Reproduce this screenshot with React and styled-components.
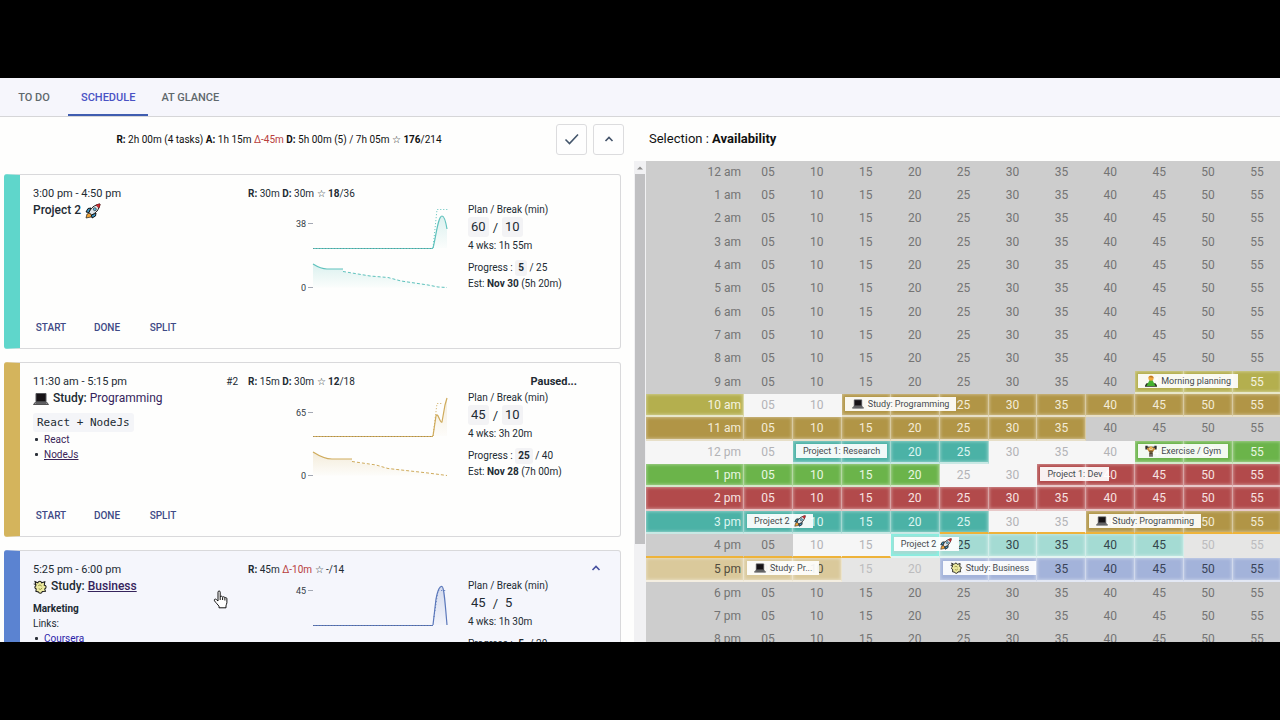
import React from "react";
import styled, { createGlobalStyle, css } from "styled-components";

const GlobalStyle = createGlobalStyle`
  * { box-sizing: border-box; }
  body {
    margin: 0;
    background: #000;
    color: #222b33;
    font-family: Roboto, "Liberation Sans", sans-serif;
    font-size: 10px;
    line-height: 15px;
  }
  button { font-family: inherit; cursor: pointer; }
`;

const Page = styled.div`
  display: flex;
  flex-direction: column;
  height: 100vh;
  padding: 78px 0;
  background: #000;
`;

const Screen = styled.main`
  position: relative;
  flex: 1;
  min-height: 0;
  display: flex;
  flex-direction: column;
  overflow: hidden;
  background: #fefefd;
`;

const TabBar = styled.nav`
  flex: none;
  display: flex;
  height: 39px;
  background: #f6f6fc;
  border-bottom: 1px solid #d6d6d8;
`;

const Tab = styled.button`
  min-width: 68px;
  padding: 2px 13px 0;
  border: 0;
  border-bottom: 2px solid ${(p) => (p.$active ? "#3f5db0" : "transparent")};
  background: none;
  color: ${(p) => (p.$active ? "#4a52c4" : "#5f686c")};
  font-size: 11px;
  font-weight: 500;
`;

const Body = styled.div`
  flex: 1;
  min-height: 0;
  display: grid;
  grid-template-columns: minmax(0, 646fr) minmax(0, 634fr);
`;

const Panel = styled.section`
  min-height: 0;
  display: flex;
  flex-direction: column;
`;

const Summary = styled.header`
  flex: none;
  display: flex;
  align-items: center;
  gap: 6px;
  height: 44px;
  padding-right: 22px;
`;

const SummaryText = styled.div`
  flex: 1;
  padding-left: 8px;
  text-align: center;
  color: #111;
`;

const IconButton = styled.button`
  display: grid;
  place-items: center;
  width: 31px;
  height: 31px;
  padding: 0;
  border: 1px solid #dcdcde;
  border-radius: 3px;
  background: #fefefe;
`;

const Delta = styled.span`
  color: #b8403c;
`;

const ListArea = styled.div`
  flex: 1;
  min-height: 0;
  display: flex;
`;

const CardList = styled.div`
  flex: 1;
  min-width: 0;
  display: flex;
  flex-direction: column;
  gap: 13px;
  padding: 13px 13px 0 4px;
  overflow: hidden;
`;

const Scrollbar = styled.div`
  flex: none;
  width: 12px;
  display: flex;
  flex-direction: column;
  align-items: center;
  background: #f1f1f3;
`;

const ScrollArrow = styled.svg`
  flex: none;
  display: block;
  width: 12px;
  height: 13px;
`;

const Thumb = styled.div`
  width: 10px;
  height: 77%;
  background: #c0c0c2;
`;

const Card = styled.article`
  flex: none;
  display: grid;
  grid-template-columns: minmax(0, 215fr) minmax(0, 220fr) minmax(0, 152fr);
  height: 175px;
  padding: 11px 0 12px 13px;
  border: 1px solid #d9d9db;
  border-left: 16px solid ${(p) => p.$accent};
  border-radius: 3px;
  background: ${(p) => (p.$hover ? "#f5f6fc" : "#fefefd")};
`;

const TaskColumn = styled.div`
  display: flex;
  flex-direction: column;
`;

const TimeLine = styled.div`
  display: flex;
  justify-content: space-between;
  padding-right: 10px;
  font-size: 11px;
  line-height: 16px;
`;

const Order = styled.span`
  font-size: 10px;
`;

const Title = styled.h2`
  display: flex;
  align-items: center;
  gap: 4px;
  margin: 0;
  font-size: 12px;
  font-weight: 500;
  line-height: 17px;
`;

const TitleLink = styled.a`
  color: #35245c;
  font-weight: ${(p) => (p.$underline ? 500 : 400)};
  text-decoration: ${(p) => (p.$underline ? "underline" : "none")};
`;

const Notes = styled.div`
  margin-top: 6px;
`;

const Code = styled.code`
  display: block;
  width: max-content;
  padding: 0 4px;
  border-radius: 3px;
  background: #f4f5f8;
  font-family: "DejaVu Sans Mono", monospace;
  font-size: 11px;
  line-height: 19px;
`;

const Links = styled.ul`
  margin: 0;
  padding: 0;
  list-style: none;

  li {
    display: flex;
    align-items: center;
    gap: 6px;
    padding-left: 2px;
  }

  li::before {
    content: "";
    width: 3px;
    height: 3px;
    border-radius: 1px;
    background: #2b3038;
  }
`;

const NoteLink = styled.a`
  color: ${(p) => (p.$fresh ? "#2a22a8" : "#3a2458")};
  text-decoration: ${(p) => (p.$underline ? "underline" : "none")};
`;

const Actions = styled.div`
  display: flex;
  gap: 20px;
  margin-top: auto;
`;

const Action = styled.button`
  width: 36px;
  padding: 0;
  border: 0;
  background: none;
  color: #3e4a86;
  font-size: 10px;
  font-weight: 500;
  line-height: 16px;
`;

const Stats = styled.div`
  line-height: 16px;
`;

const Chart = styled.svg`
  display: block;
  width: 200px;
  height: 92px;
  overflow: visible;
`;

const AxisLabel = styled.text`
  fill: #333b45;
  font-size: 9px;
  text-anchor: end;
`;

const StatusLine = styled.div`
  display: flex;
  justify-content: flex-end;
  height: 16px;
  font-size: 11px;
  font-weight: 700;
  line-height: 16px;
`;

const ChevronSlot = styled.div`
  display: flex;
  justify-content: center;
  width: 43px;
  padding: 2px 6px 0 0;
`;

const PlanValues = styled.div`
  display: flex;
  align-items: center;
  gap: 4px;
  height: 20px;
  margin-bottom: 1px;
  font-size: 13px;
`;

const Value = styled.span`
  display: inline-block;
  padding: 0 3px;
  border-radius: 3px;
  background: ${(p) => (p.$bare ? "transparent" : "#f3f3f5")};
  line-height: ${(p) => (p.$small ? 16 : 20)}px;
  font-weight: ${(p) => (p.$small ? 700 : 400)};
`;

const Progress = styled.div`
  margin-top: 7px;
  line-height: 16px;
`;

const SelectionTitle = styled.header`
  flex: none;
  height: 44px;
  padding-left: 3px;
  color: #111;
  font-size: 13px;
  line-height: 44px;
`;

const tones = {
  plain: { bg: "#cdcdcd", fg: "#747474" },
  free: { bg: "#f6f6f6", fg: "#b3b3b6" },
  faded: { bg: "#e6e6e5", fg: "#bcbcbe" },
  olive: { bg: "#b4af4e", fg: "#f4f3e0", solid: true },
  brown: { bg: "#b19546", fg: "#f3ecd8", solid: true },
  teal: { bg: "#4bb2a6", fg: "#def5f1", solid: true },
  green: { bg: "#6bb44a", fg: "#e8f7e2", solid: true },
  red: { bg: "#b24a4b", fg: "#f7e3e2", solid: true },
  mint: { bg: "#a4dbd3", fg: "#35474c", solid: true },
  tan: { bg: "#dac99b", fg: "#524c3d", solid: true },
  blue: { bg: "#a3b3da", fg: "#394358", solid: true },
};

const Hours = styled.table`
  width: calc(100% + 2px);
  border-collapse: separate;
  border-spacing: 0;
  table-layout: fixed;
  background: #cdcdcd;
`;

const HourRow = styled.tr`
  height: ${(p) => (p.$now ? 24 : 23)}px;
  &:nth-child(3n) { height: 24px; }
`;

const cell = css`
  position: relative;
  padding: 0;
  background: ${(p) => tones[p.$tone].bg};
  color: ${(p) => tones[p.$tone].fg};
  font-size: 12px;
  line-height: 18px;
  font-weight: 400;
  border: 0 solid transparent;
  border-right-width: 1px;
  border-bottom-width: 2px;
  ${(p) =>
    tones[p.$tone].solid &&
    css`
      border-right-color: rgba(255, 255, 255, 0.5);
      border-bottom-color: rgba(255, 255, 255, 0.7);
      box-shadow: inset 0 0 3px 1px rgba(255, 255, 255, 0.35);
    `}
  ${(p) => p.$line && css`border-bottom-color: #eeb33a;`}
  ${(p) => p.$current && css`box-shadow: inset 0 0 2px 2px #8aeee0;`}
`;

const HourLabel = styled.th`
  ${cell}
  width: 98px;
  padding-right: 2px;
  text-align: right;
`;

const Slot = styled.td`
  ${cell}
  text-align: center;
`;

const EventChip = styled.div`
  position: absolute;
  z-index: 1;
  top: 3px;
  left: 3px;
  display: flex;
  align-items: center;
  gap: 4px;
  padding: 0 7px;
  background: rgba(255, 255, 255, 0.92);
  color: #454a4e;
  font-size: 9px;
  font-weight: 400;
  line-height: 14px;
  white-space: nowrap;
`;

const Cursor = styled.svg`
  position: absolute;
  left: 213px;
  top: 512px;
`;

function Rocket({ size }) {
  return (
    <svg width={size} height={size} viewBox="0 0 16 16">
      <path d="M1 15l1-4 3-1 2 2-1 2z" fill="#f0a437" stroke="#222" strokeWidth=".7" />
      <path d="M6 5L3 5.500 1 9l3 .5zM11 10l-.5 3L7 15l-.5-3z" fill="#3d9ac8" stroke="#111" />
      <path d="M4 9.500C6 5 9 2 15 1c-1 6-4 9-8.500 11z" fill="#dfe6ea" stroke="#1a1a1a" />
      <path d="M11 2.200C12 1.500 13.500 1 15 1c0 1.500-.5 3-1.200 4z" fill="#d02f34" stroke="#8a1518" strokeWidth=".6" />
      <circle cx="9.800" cy="6.200" r="1.500" fill="#5fb7dc" stroke="#222" strokeWidth=".6" />
    </svg>
  );
}

function Laptop({ size }) {
  return (
    <svg width={size} height={size} viewBox="0 0 16 16">
      <path d="M3 2.500h10v8H3z" fill="#171316" stroke="#55565a" />
      <path d="M2.500 11h11l2 2.500H.5z" fill="#8d8d92" stroke="#333" strokeWidth=".8" />
      <path d="M3 12.200h10" stroke="#333" strokeWidth=".7" />
    </svg>
  );
}

function Puzzle({ size }) {
  return (
    <svg width={size} height={size} viewBox="0 0 16 16">
      <path
        d="M2.500 2l3 1.200C6.500.8 9.300 1 9.800 3.200L13.500 2l-.6 4c2.600.3 2.800 3 .5 4.200l.8 2.800-3.600.2c-.7 2.400-3.600 2.600-4.400.4L3.300 13l.4-2.800C1.800 9.600 1.600 7.400 3.200 6.600z"
        fill="#ece9a0"
        stroke="#1c1c1c"
        strokeWidth="1.200"
      />
      <path d="M6 6.500l2-1 2 1.500M6.500 10l2 .8 2-1.600" fill="none" stroke="#8b8a35" />
      <path d="M.8 4.500l3 .8M2 1l1.500 2.500" stroke="#1c1c1c" />
    </svg>
  );
}

function Person({ size }) {
  return (
    <svg width={size} height={size} viewBox="0 0 16 16">
      <path d="M0 14l2-3h12l2 3v1.500H0z" fill="#27301f" />
      <path d="M2 14.500L6.500 6h3l4.500 8.500z" fill="#45b02f" />
      <circle cx="8" cy="4" r="3.500" fill="#f0a83a" />
      <path d="M4.500 3.500c1-3 6-3 7 0-2 .3-5-1-7 0z" fill="#b9742b" />
    </svg>
  );
}

function Lifter({ size }) {
  return (
    <svg width={size} height={size} viewBox="0 0 16 16">
      <path d="M1 3h14" stroke="#333" strokeWidth="1.500" />
      <path d="M2 1v5M14 1v5" stroke="#2b2b2b" strokeWidth="3" />
      <path d="M3.500 4L6 8h4l2.500-4" fill="none" stroke="#c98a35" strokeWidth="2.500" />
      <circle cx="8" cy="4" r="2.300" fill="#eab052" />
      <path d="M5.500 7.500h5L10 12H6z" fill="#6b5a35" />
      <path d="M6.700 11v4.500M9.300 11v4.500" stroke="#3b3127" strokeWidth="1.800" />
    </svg>
  );
}

const icons = { rocket: Rocket, laptop: Laptop, puzzle: Puzzle, person: Person, lifter: Lifter };

function Icon({ name, size }) {
  const Drawing = icons[name];
  return <Drawing size={size} />;
}

function Chevron({ color = "#44536a" }) {
  return (
    <svg width="10" height="8" viewBox="0 0 10 8">
      <path d="M1.500 6L5 2.500 8.500 6" fill="none" stroke={color} strokeWidth="1.600" />
    </svg>
  );
}

function TaskChart({ id, color, max, maxY, base, area, solid, dotted, burn, burnArea, estimate, zeroY }) {
  return (
    <Chart viewBox="0 1 200 92" role="img" aria-label={`Time history, up to ${max}`}>
      <defs>
        <linearGradient id={id} x1="0" y1="0" x2="0" y2="1">
          <stop offset="0" stopColor={color} stopOpacity=".22" />
          <stop offset="1" stopColor={color} stopOpacity=".02" />
        </linearGradient>
      </defs>
      <AxisLabel x="58" y={maxY + 3}>{max}</AxisLabel>
      <path d={`M60 ${maxY}h5`} stroke="#a3a8b3" />
      <AxisLabel x="58" y={zeroY + 3}>0</AxisLabel>
      <path d={`M60 ${zeroY}h5`} stroke="#a3a8b3" />
      <path d={area} fill={`url(#${id})`} />
      <path d={`M65 ${base}H185`} stroke={color} />
      <path d={`M65 ${base}H185`} stroke="#555" strokeOpacity=".35" strokeDasharray="1 2" />
      <path d={dotted} fill="none" stroke={color} strokeDasharray="1 2" />
      <path d={solid} fill="none" stroke={color} strokeWidth="1.200" />
      <path d={burnArea} fill={`url(#${id})`} />
      <path d={burn} fill="none" stroke={color} strokeWidth="1.200" />
      <path d={estimate} fill="none" stroke={color} strokeDasharray="3 2" />
    </Chart>
  );
}

const tasks = [
  {
    id: "project",
    accent: "#5fd6cb",
    time: "3:00 pm - 4:50 pm",
    title: <>Project 2 <Icon name="rocket" size={16} /></>,
    stats: <><b>R:</b> 30m <b>D:</b> 30m ☆ <b>18</b>/36</>,
    plan: ["60", "10"],
    weeks: "1h 55m",
    done: "5",
    total: "25",
    due: "Nov 30",
    left: "5h 20m",
    chart: {
      color: "#5fc2bd", max: "38", maxY: 22.5, base: 47.500, zeroY: 86.500,
      area: "M185 47C188 36 190 15 194 15c2 0 4 7 5 13v19z",
      solid: "M185 47C188 36 190 15 194 15c2 0 4 7 5 13",
      dotted: "M185 47L189 8.500H200",
      burn: "M65 63Q73 68 79 68H95",
      burnArea: "M65 63Q73 68 79 68H95V71L140 77 199 86.500H65z",
      estimate: "M95 70.500L122 75 140 76.500 153 80 180 84 190 86 199 86.500",
    },
  },
  {
    id: "programming",
    accent: "#d4b45c",
    time: "11:30 am - 5:15 pm",
    order: "#2",
    status: "Paused...",
    title: <><Icon name="laptop" size={16} /><span>Study: <TitleLink href="#programming">Programming</TitleLink></span></>,
    notes: (
      <Notes>
        <Code>React + NodeJs</Code>
        <Links>
          <li><NoteLink href="#react">React</NoteLink></li>
          <li><NoteLink href="#node" $underline>NodeJs</NoteLink></li>
        </Links>
      </Notes>
    ),
    stats: <><b>R:</b> 15m <b>D:</b> 30m ☆ <b>12</b>/18</>,
    plan: ["45", "10"],
    weeks: "3h 20m",
    done: "25",
    total: "40",
    due: "Nov 28",
    left: "7h 00m",
    chart: {
      color: "#cfab5c", max: "65", maxY: 23.500, base: 47.500, zeroY: 86.500,
      area: "M185 47L188 27 190 26 194 34 197 16 199 9V47z",
      solid: "M185 47L188 27Q189 24 191 29T194 33L197 16 199 9",
      dotted: "M185 47L189 14.500H194",
      burn: "M65 63Q76 70 84 70H104",
      burnArea: "M65 63Q76 70 84 70H104V73L140 79 199 86.500H65z",
      estimate: "M104 72.500L128 76 140 79.500 180 84 199 86.500",
    },
  },
  {
    id: "business",
    accent: "#5b83d1",
    hover: true,
    time: "5:25 pm - 6:00 pm",
    title: <><Icon name="puzzle" size={14} /><span>Study: <TitleLink href="#business" $underline>Business</TitleLink></span></>,
    notes: (
      <Notes>
        <b>Marketing</b>
        <div>Links:</div>
        <Links>
          <li><NoteLink href="#coursera" $fresh $underline>Coursera</NoteLink></li>
        </Links>
      </Notes>
    ),
    stats: <><b>R:</b> 45m <Delta>Δ-10m</Delta> ☆ -/14</>,
    plan: ["45", "5"],
    weeks: "1h 30m",
    done: "5",
    total: "20",
    due: "Nov 29",
    left: "3h 45m",
    chart: {
      color: "#5b78bb", max: "45", maxY: 13.500, base: 48.500, zeroY: 86.500,
      area: "M185 48L188 22C190 12 192 9 194 9.500 196 10 197 24 199 48z",
      solid: "M185 48L188 22C190 12 192 9 194 9.500 196 10 197 24 199 48",
      dotted: "M186 40L190 13.500H199",
      burn: "M65 66Q73 70 79 70H95",
      burnArea: "M65 66Q73 70 79 70H95L199 86.500H65z",
      estimate: "M95 72.500L199 86.500",
    },
  },
];

function TaskCard({ task }) {
  return (
    <Card $accent={task.accent} $hover={task.hover}>
      <TaskColumn>
        <TimeLine>
          {task.time}
          {task.order && <Order>{task.order}</Order>}
        </TimeLine>
        <Title>{task.title}</Title>
        {task.notes}
        <Actions>
          <Action>START</Action>
          <Action>DONE</Action>
          <Action>SPLIT</Action>
        </Actions>
      </TaskColumn>
      <div>
        <Stats>{task.stats}</Stats>
        <TaskChart id={task.id} {...task.chart} />
      </div>
      <div>
        <StatusLine>
          {task.status}
          <ChevronSlot>{task.hover && <Chevron color="#4650a0" />}</ChevronSlot>
        </StatusLine>
        <div>Plan / Break (min)</div>
        <PlanValues>
          <Value $bare={task.hover}>{task.plan[0]}</Value>/<Value $bare={task.hover}>{task.plan[1]}</Value>
        </PlanValues>
        <div>4 wks: {task.weeks}</div>
        <Progress>
          Progress : <Value $small $bare={task.hover}>{task.done}</Value> / {task.total}
        </Progress>
        <div>Est: <b>{task.due}</b> ({task.left})</div>
      </div>
    </Card>
  );
}

const minutes = ["05", "10", "15", "20", "25", "30", "35", "40", "45", "50", "55"];

const fill = (...runs) => runs.flatMap(([tone, count]) => Array(count).fill(tone));

const hours = [
  ...["12 am", "1 am", "2 am", "3 am", "4 am", "5 am", "6 am", "7 am", "8 am"].map((label) => ({
    label,
    cells: fill(["plain", 12]),
  })),
  { label: "9 am", cells: fill(["plain", 9], ["olive", 3]), events: { 9: { icon: "person", text: "Morning planning" } } },
  { label: "10 am", cells: fill(["olive", 1], ["free", 2], ["brown", 9]), events: { 3: { icon: "laptop", text: "Study: Programming" } } },
  { label: "11 am", cells: fill(["brown", 8], ["plain", 4]) },
  {
    label: "12 pm",
    cells: fill(["free", 2], ["teal", 4], ["free", 3], ["green", 3]),
    events: { 2: { text: "Project 1: Research" }, 9: { icon: "lifter", text: "Exercise / Gym" } },
  },
  { label: "1 pm", cells: fill(["green", 5], ["free", 2], ["red", 5]), events: { 7: { text: "Project 1: Dev" } } },
  { label: "2 pm", cells: fill(["red", 12]) },
  {
    label: "3 pm",
    cells: fill(["teal", 6], ["free", 2], ["brown", 4]),
    line: [5, 12],
    events: { 1: { after: "rocket", text: "Project 2" }, 8: { icon: "laptop", text: "Study: Programming" } },
  },
  {
    label: "4 pm",
    now: true,
    cells: fill(["plain", 2], ["free", 2], ["mint", 6], ["faded", 2]),
    line: [0, 4],
    current: 4,
    events: { 4: { after: "rocket", text: "Project 2" } },
  },
  {
    label: "5 pm",
    cells: fill(["tan", 3], ["faded", 2], ["blue", 7]),
    events: { 1: { icon: "laptop", text: "Study: Pr..." }, 5: { icon: "puzzle", text: "Study: Business" } },
  },
  ...["6 pm", "7 pm", "8 pm"].map((label) => ({ label, cells: fill(["plain", 12]) })),
];

function Hour({ hour }) {
  const props = (i) => ({
    $tone: hour.cells[i],
    $line: Boolean(hour.line && i >= hour.line[0] && i < hour.line[1]),
    $current: hour.current === i,
  });
  return (
    <HourRow $now={hour.now}>
      <HourLabel scope="row" {...props(0)}>{hour.label}</HourLabel>
      {minutes.map((minute, i) => {
        const event = hour.events && hour.events[i + 1];
        return (
          <Slot key={minute} {...props(i + 1)}>
            {minute}
            {event && (
              <EventChip>
                {event.icon && <Icon name={event.icon} size={12} />}
                {event.text}
                {event.after && <Icon name={event.after} size={12} />}
              </EventChip>
            )}
          </Slot>
        );
      })}
    </HourRow>
  );
}

export default function App() {
  return (
    <Page>
      <GlobalStyle />
      <Screen>
        <TabBar>
          <Tab>TO DO</Tab>
          <Tab $active>SCHEDULE</Tab>
          <Tab>AT GLANCE</Tab>
        </TabBar>
        <Body>
          <Panel>
            <Summary>
              <SummaryText>
                <b>R:</b> 2h 00m (4 tasks) <b>A:</b> 1h 15m <Delta>Δ-45m</Delta> <b>D:</b> 5h 00m (5) / 7h 05m ☆ <b>176</b>/214
              </SummaryText>
              <IconButton aria-label="Complete">
                <svg width="16" height="14" viewBox="0 0 16 14">
                  <path d="M1.500 7.500L5.500 11.500 14 2.500" fill="none" stroke="#44566c" strokeWidth="1.600" />
                </svg>
              </IconButton>
              <IconButton aria-label="Collapse"><Chevron /></IconButton>
            </Summary>
            <ListArea>
              <CardList>
                {tasks.map((task) => <TaskCard key={task.id} task={task} />)}
              </CardList>
              <Scrollbar>
                <ScrollArrow viewBox="0 0 12 13"><path d="M3 8.500L6 5.500 9 8.500z" fill="#8d8d8d" /></ScrollArrow>
                <Thumb />
              </Scrollbar>
            </ListArea>
          </Panel>
          <Panel>
            <SelectionTitle>Selection : <b>Availability</b></SelectionTitle>
            <Hours>
              <tbody>
                {hours.map((hour) => <Hour key={hour.label} hour={hour} />)}
              </tbody>
            </Hours>
          </Panel>
        </Body>
        <Cursor width="15" height="19" viewBox="0 0 15 19">
          <path
            d="M5 11V2.200C5 .5 7.200.5 7.200 2.200V7c.3-1.200 2.300-1 2.400.3.5-.9 2.200-.7 2.300.6.6-.7 2-.4 2 .9v4c0 1-.9 2-.9 3v2H6v-1.600c-1-1.400-3-3.200-4.500-5.400-.8-1.300.7-2.300 1.800-1.300z"
            fill="#fff"
            stroke="#111"
          />
          <path d="M7.200 7v3M9.600 7.500v2.500M11.900 8v2.500" stroke="#111" />
        </Cursor>
      </Screen>
    </Page>
  );
}
